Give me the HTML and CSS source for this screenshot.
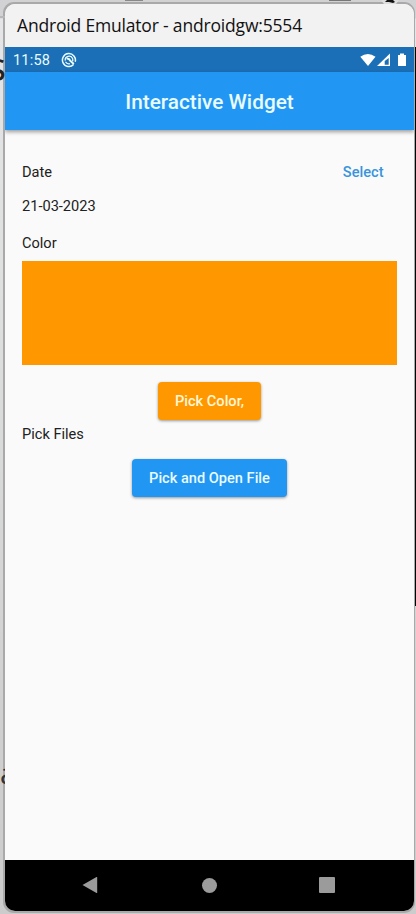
FILE: index.html
```html
<!DOCTYPE html>
<html lang="en">
<head>
<meta charset="utf-8">
<title>Interactive Widget</title>
<link rel="stylesheet" href="styles.css">
</head>
<body>
<div class="desktop">
  <span class="behind tab-a"></span>
  <span class="behind tab-b"></span>
  <svg class="behind scribble" width="24" height="5" viewBox="0 0 24 5"><path d="M3 0h18l-3 4H6z" fill="#dededf"/><path d="M9 0h6l2 2-2 1-4-1-4 0z" fill="#111"/></svg>
  <span class="behind toolbar-edge"></span>
  <span class="behind letter-s">s</span>
  <span class="behind letter-a">a</span>
  <span class="behind dark-panel"></span>
  <main class="window">
    <header class="titlebar"><span class="titlebar-text">Android Emulator - androidgw:5554</span></header>
    <div class="statusbar">
      <span class="clock">11:58</span>
      <svg class="notice" width="16" height="16" viewBox="0 0 16 16" fill="none" stroke="#e8fbff"><path d="M12.6 12.6A6.5 6.5 0 1 1 14.2 9.8" stroke-width="1.5"/><path d="M4.3 8.6A3.8 3.8 0 0 1 11.6 6.6Q12 8 11.6 9.2M4.5 9.8A3.9 3.9 0 0 0 9 11.7" stroke-width="1.3"/><path d="M5.5 6.6Q8.2 6.2 9.2 8.7L12.8 12" stroke-width="2"/></svg>
      <svg class="signals" width="48" height="14" viewBox="0 0 48 14"><path d="M.3 3.7Q7.8-1.9 15.5 3.7L8 13z" fill="#fff"/><path d="M30 .5V13H17z" fill="#fff"/><path d="M28.7 5v6.8h-4V7.9z" fill="#1b6fb6"/><path d="M38 2h2V.5h4V2h2v11h-8z" fill="#fff"/></svg>
    </div>
    <div class="appbar"><h1>Interactive Widget</h1></div>
    <section class="content">
      <div class="date-row"><span>Date</span><button class="link">Select</button></div>
      <p class="date">21-03-2023</p>
      <p class="label">Color</p>
      <div class="swatch"></div>
      <button class="btn orange">Pick Color,</button>
      <p class="files">Pick Files</p>
      <button class="btn blue">Pick and Open File</button>
    </section>
    <nav class="navbar">
      <svg width="16" height="18" viewBox="0 0 16 18"><path d="M.5 9L14.5 1q.7-.3.7.5v15q0 .8-.7.5z" fill="#9b9b9b"/></svg>
      <span class="home"></span>
      <span class="recent"></span>
    </nav>
  </main>
</div>
</body>
</html>
```

FILE: styles.css
```css
* { box-sizing: border-box; }
body { margin: 0; }
h1, p { margin: 0; font-weight: 400; }
button { border: 0; padding: 0; background: none; font: inherit; }

.desktop {
  position: relative;
  width: 416px;
  height: 914px;
  padding: 4px 2px 3px 5px;
  overflow: hidden;
  background: linear-gradient(#d2d2d5 0 18px, #e4e5e6 19px, #dedfdf 300px, #cfcfcf 740px, #cccccc);
  font-family: Roboto, sans-serif;
}
.desktop::before {
  content: "";
  position: absolute;
  left: 3px;
  top: 2px;
  width: 412px;
  height: 911px;
  border-radius: 11px;
  background: #a9a9aa;
}
.behind { position: absolute; }
.tab-a { left: 125px; top: 0; width: 18px; height: 1px; background: #88888b; }
.tab-b { left: 329px; top: 0; width: 22px; height: 1px; background: #77777a; }
.scribble { left: 378px; top: 0; }
.toolbar-edge { left: 0; top: 16px; width: 5px; height: 2px; background: #b7b7b9; }
.letter-s { left: -13px; top: 42px; font: 40px/48px "Open Sans", sans-serif; color: #222; }
.letter-a { left: 0; top: 755px; font: 29px/36px "Open Sans", sans-serif; color: #333; }
.dark-panel { left: 415px; top: 47px; width: 1px; height: 559px; background: #050505; }

.window {
  position: relative;
  display: flex;
  flex-direction: column;
  width: 409px;
  height: 907px;
  overflow: hidden;
  border-radius: 10px;
  background: #fafafa;
}
.titlebar { height: 43px; padding-left: 12px; background: #f2f2f2; }
.titlebar-text { font: 17.5px/42px "Open Sans", sans-serif; letter-spacing: -.18px; color: #111; white-space: nowrap; }

.statusbar {
  display: flex;
  align-items: center;
  height: 25px;
  padding: 0 6px 0 8px;
  background: #1b6fb6;
  color: #e8fbff;
}
.clock { width: 37px; padding-top: 1px; font-size: 14.5px; letter-spacing: .2px; }
.notice { margin-left: 11px; }
.signals { margin-left: auto; }

.appbar {
  display: flex;
  align-items: center;
  justify-content: center;
  height: 58px;
  padding-top: 2px;
  background: #2196f3;
  box-shadow: 0 2px 4px rgba(0, 0, 0, .38);
}
.appbar h1 { font-size: 20.8px; font-weight: 500; color: #e8fbff; }

.content {
  display: flex;
  flex: 1;
  flex-direction: column;
  padding: 32px 17px 0;
  font-size: 14.6px;
  line-height: 20px;
  color: #212121;
}
.date-row { display: flex; justify-content: space-between; padding-right: 13.5px; }
.link { font-weight: 500; color: #3994dc; }
.date { margin-top: 14px; }
.label { margin-top: 17px; }
.swatch { height: 104px; margin-top: 8px; background: #ff9800; }
.btn {
  align-self: center;
  height: 38px;
  border-radius: 4px;
  font-weight: 500;
  color: #e8fbff;
  box-shadow: 0 1px 3px rgba(0, 0, 0, .4);
}
.orange { width: 103px; margin-top: 17px; background: #ff9800; color: #fff7d6; }
.files { margin-top: 4px; }
.blue { width: 155px; margin-top: 15px; background: #2196f3; }

.navbar {
  display: flex;
  align-items: center;
  height: 51px;
  padding: 0 0 1px 77px;
  background: #000;
}
.home { width: 15px; height: 15px; margin-left: 104px; border-radius: 50%; background: #9b9b9b; }
.recent { width: 16px; height: 16px; margin-left: 102px; border-radius: 1px; background: #9b9b9b; }
```
